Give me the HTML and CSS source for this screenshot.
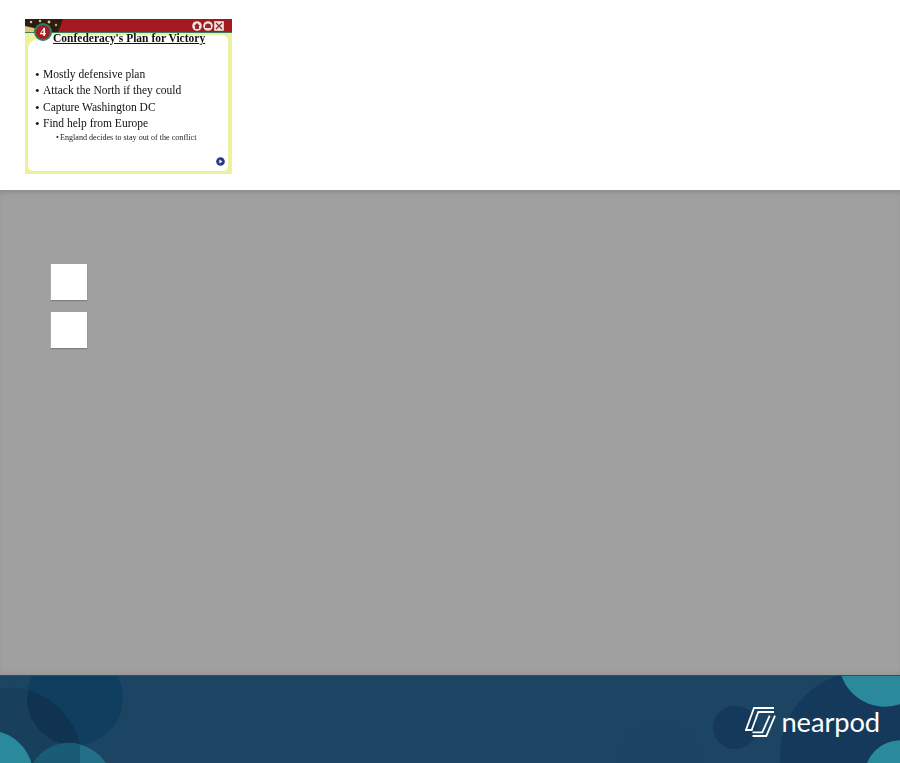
FILE: index.html
```html
<!DOCTYPE html>
<html lang="en">
<head>
  <meta charset="UTF-8" />
  <meta name="viewport" content="width=device-width, initial-scale=1" />
  <title>Nearpod - Confederacy's Plan for Victory</title>
  <link rel="stylesheet" href="styles.css">
</head>
<body>
  <header class="top">
    <div class="slide">
      <div class="slide-bar">
        <svg class="flag" viewBox="0 0 40 13" aria-hidden="true">
          <rect width="40" height="13" fill="#a3191f" />
          <path d="M0 0H38L33 13H0Z" fill="#2b1d14" />
          <path d="M0 7L9 9L15 13H0Z" fill="#d9c878" />
          <circle cx="6" cy="3" r="1.200" fill="#e3cf7c" />
          <circle cx="15" cy="2" r="1.200" fill="#e3cf7c" />
          <circle cx="24" cy="3" r="1.400" fill="#e3cf7c" />
          <circle cx="31" cy="6" r="1.200" fill="#c9ae66" />
          <circle cx="21" cy="8" r="1" fill="#8f6f3a" />
        </svg>
        <div class="slide-tools">
          <svg class="tool" viewBox="0 0 10 10" aria-hidden="true">
            <circle cx="5" cy="5" r="4.800" fill="#f2e6e0" />
            <path d="M5 2L8 5H7V8H3V5H2Z" fill="#8e2a2c" />
          </svg>
          <svg class="tool" viewBox="0 0 10 10" aria-hidden="true">
            <circle cx="5" cy="5" r="4.800" fill="#f2e6e0" />
            <path d="M2 7V5.500A3 3 0 0 1 8 5.500V7Z" fill="#8e2a2c" />
          </svg>
          <svg class="tool" viewBox="0 0 10 10" aria-hidden="true">
            <rect x="0.2" y="0.2" width="9.600" height="9.600" fill="#f2e6e0" />
            <path d="M2 2L8 8M8 2L2 8" stroke="#8e2a2c" stroke-width="1.400" />
          </svg>
        </div>
      </div>
      <div class="slide-body">
        <h2 class="slide-title">Confederacy's Plan for Victory</h2>
        <ul class="points">
          <li>Mostly defensive plan</li>
          <li>Attack the North if they could</li>
          <li>Capture Washington DC</li>
          <li>Find help from Europe</li>
        </ul>
        <ul class="subpoints">
          <li>England decides to stay out of the conflict</li>
        </ul>
        <svg class="next" viewBox="0 0 10 10" aria-hidden="true">
          <circle cx="5" cy="5" r="4.800" fill="#2c3a86" />
          <path d="M3.700 2.800L7.200 5L3.700 7.200Z" fill="#fff" />
        </svg>
      </div>
      <div class="badge">4</div>
    </div>
  </header>

  <main class="stage">
    <div class="tile"></div>
    <div class="tile"></div>
  </main>

  <footer class="bottom">
    <svg class="blobs" viewBox="0 0 900 88" preserveAspectRatio="none" aria-hidden="true">
      <circle cx="10" cy="85" r="73" fill="#183f5c" />
      <circle cx="75" cy="22" r="48" fill="#103e5e" />
      <path d="M27 22A48 48 0 0 0 80 70A73 73 0 0 0 30 15Z" fill="#0f3350" />
      <circle cx="70" cy="110" r="42" fill="#226f88" />
      <path d="M33 88A42 42 0 0 1 80 69V88Z" fill="#1a5b76" />
      <circle cx="-12" cy="100" r="45" fill="#2a8a9c" />
      <circle cx="660" cy="88" r="42" fill="#1b4464" />
      <circle cx="735" cy="52" r="22" fill="#15395a" />
      <circle cx="865" cy="80" r="85" fill="#15395a" />
      <circle cx="885" cy="-15" r="46" fill="#2a8a9c" />
      <circle cx="900" cy="100" r="35" fill="#2a8a9c" />
    </svg>
    <div class="logo">
      <svg class="logo-mark" viewBox="0 0 31 30" aria-hidden="true">
        <g fill="none" stroke="#fff" stroke-width="1.800">
          <path d="M29 1H9L1 23H7.500" />
          <path d="M29 5H13.300L6.700 23" />
          <path d="M30 8.700L21.300 29H7.500" />
          <path d="M24.700 8.700L17.300 25.300H7.500" />
        </g>
      </svg>
      <span class="logo-name">nearpod</span>
    </div>
  </footer>
</body>
</html>
```

FILE: styles.css
```css
* { box-sizing: border-box; margin: 0; padding: 0; }
html, body { height: 100%; }
body { display: flex; flex-direction: column; height: 100vh; background: #fff; overflow: hidden; font-family: 'Liberation Serif', serif; }

.top { height: 190px; flex: none; padding: 19px 0 0 25px; background: #fff; }

.slide { position: relative; width: 207px; height: 155px; background: #edf19b; filter: blur(0.45px); display: flex; flex-direction: column; }
.slide-bar { height: 14px; flex: none; display: flex; justify-content: space-between; background: #a3191f; border-bottom: 1px solid #3f7a6c; }
.flag { width: 40px; height: 13px; }
.slide-tools { display: flex; gap: 1px; padding: 2px 8px 0 0; }
.tool { width: 10px; height: 10px; }
.slide-body { position: relative; flex: 1; margin: 2px 4px 3px 3px; background: #fff; border-radius: 30px 6px 5px 5px / 13px 6px 5px 5px; }
.slide-title { margin-top: -4px; padding-left: 25px; font-size: 11.5px; line-height: 14px; font-weight: 700; color: #111; text-decoration: underline; white-space: nowrap; }
.points { list-style: none; margin-top: 20.5px; padding-left: 7px; }
.points li { font-size: 11.5px; line-height: 16.6px; color: #111; white-space: nowrap; }
.points li::before { content: "\2022"; display: inline-block; width: 8px; font-size: 13px; line-height: 10px; vertical-align: -1px; }
.subpoints { list-style: none; margin-top: 1.5px; padding-left: 28px; }
.subpoints li { font-size: 8.1px; line-height: 10px; color: #222; white-space: nowrap; }
.subpoints li::before { content: "\2022"; display: inline-block; width: 4px; }
.next { position: absolute; right: 3px; bottom: 5px; width: 9px; height: 9px; }
.badge { position: absolute; left: 9px; top: 4px; width: 18px; height: 18px; border-radius: 50%; background: #a61e22; border: 2px solid #2f7d63; color: #fff; font-size: 12px; font-weight: 700; line-height: 14px; text-align: center; }

.stage { flex: 1; display: flex; flex-direction: column; gap: 12px; padding: 74px 0 0 51px; background: #a0a0a0; box-shadow: inset 0 6px 6px -4px #8a8a8a, inset 0 -5px 5px -4px #959595; }
.tile { width: 36px; height: 36px; background: #fff; box-shadow: 0 1px 1px #7f7f7f, -1px 0 0 #b5b5b5; }

.bottom { position: relative; height: 88px; flex: none; display: flex; justify-content: flex-end; align-items: flex-start; padding: 31px 20px 0 0; background: #1b4562; border-top: 1px solid #2d4a72; overflow: hidden; }
.blobs { position: absolute; left: 0; top: 0; width: 100%; height: 100%; }
.logo { position: relative; display: flex; align-items: flex-start; gap: 5px; }
.logo-mark { width: 31px; height: 30px; }
.logo-name { font-family: Lato, sans-serif; font-size: 27.3px; line-height: 30px; font-weight: 400; color: #fff; letter-spacing: -0.1px; }
```
